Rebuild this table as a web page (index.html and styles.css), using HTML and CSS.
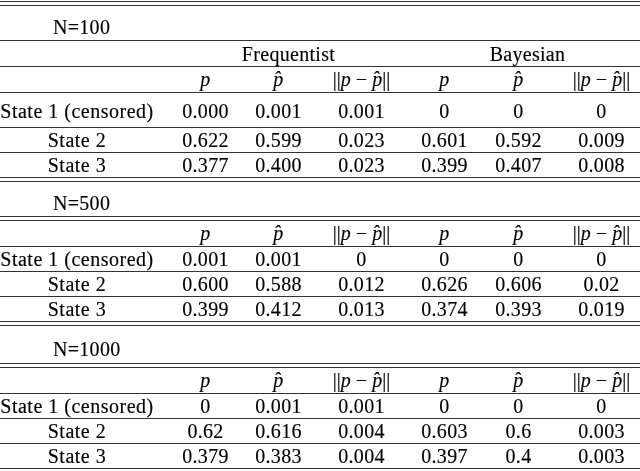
FILE: index.html
```html
<!DOCTYPE html>
<html lang="en">
<head>
  <meta charset="UTF-8">
  <title>Estimated state probabilities</title>
  <link rel="stylesheet" href="styles.css">
</head>
<body>
  <div class="table">

    <!-- N = 100 -->
    <div class="double"></div>
    <div class="row n"><span class="nlabel">N=100</span></div>
    <div class="rule"></div>
    <div class="row group">
      <span class="span-freq">Frequentist</span>
      <span class="span-bayes">Bayesian</span>
    </div>
    <div class="rule"></div>
    <div class="row head">
      <span></span>
      <span><i>p</i></span><span><i>p&#770;</i></span><span class="norm">||<i>p</i> &minus; <i>p&#770;</i>||</span>
      <span><i>p</i></span><span><i>p&#770;</i></span><span class="norm">||<i>p</i> &minus; <i>p&#770;</i>||</span>
    </div>
    <div class="rule"></div>
    <div class="row tall">
      <span class="lbl">State 1 (censored)</span>
      <span>0.000</span><span>0.001</span><span>0.001</span>
      <span>0</span><span>0</span><span>0</span>
    </div>
    <div class="rule"></div>
    <div class="row">
      <span class="lbl">State 2</span>
      <span>0.622</span><span>0.599</span><span>0.023</span>
      <span>0.601</span><span>0.592</span><span>0.009</span>
    </div>
    <div class="rule"></div>
    <div class="row">
      <span class="lbl">State 3</span>
      <span>0.377</span><span>0.400</span><span>0.023</span>
      <span>0.399</span><span>0.407</span><span>0.008</span>
    </div>

    <!-- N = 500 -->
    <div class="double"></div>
    <div class="row n"><span class="nlabel">N=500</span></div>
    <div class="double"></div>
    <div class="row head">
      <span></span>
      <span><i>p</i></span><span><i>p&#770;</i></span><span class="norm">||<i>p</i> &minus; <i>p&#770;</i>||</span>
      <span><i>p</i></span><span><i>p&#770;</i></span><span class="norm">||<i>p</i> &minus; <i>p&#770;</i>||</span>
    </div>
    <div class="rule"></div>
    <div class="row">
      <span class="lbl">State 1 (censored)</span>
      <span>0.001</span><span>0.001</span><span>0</span>
      <span>0</span><span>0</span><span>0</span>
    </div>
    <div class="rule"></div>
    <div class="row">
      <span class="lbl">State 2</span>
      <span>0.600</span><span>0.588</span><span>0.012</span>
      <span>0.626</span><span>0.606</span><span>0.02</span>
    </div>
    <div class="rule"></div>
    <div class="row">
      <span class="lbl">State 3</span>
      <span>0.399</span><span>0.412</span><span>0.013</span>
      <span>0.374</span><span>0.393</span><span>0.019</span>
    </div>

    <!-- N = 1000 -->
    <div class="double"></div>
    <div class="row n n-last"><span class="nlabel">N=1000</span></div>
    <div class="double"></div>
    <div class="row head">
      <span></span>
      <span><i>p</i></span><span><i>p&#770;</i></span><span class="norm">||<i>p</i> &minus; <i>p&#770;</i>||</span>
      <span><i>p</i></span><span><i>p&#770;</i></span><span class="norm">||<i>p</i> &minus; <i>p&#770;</i>||</span>
    </div>
    <div class="rule"></div>
    <div class="row">
      <span class="lbl">State 1 (censored)</span>
      <span>0</span><span>0.001</span><span>0.001</span>
      <span>0</span><span>0</span><span>0</span>
    </div>
    <div class="rule"></div>
    <div class="row">
      <span class="lbl">State 2</span>
      <span>0.62</span><span>0.616</span><span>0.004</span>
      <span>0.603</span><span>0.6</span><span>0.003</span>
    </div>
    <div class="rule"></div>
    <div class="row">
      <span class="lbl">State 3</span>
      <span>0.379</span><span>0.383</span><span>0.004</span>
      <span>0.397</span><span>0.4</span><span>0.003</span>
    </div>
    <div class="rule"></div>

  </div>
</body>
</html>
```

FILE: styles.css
```css
* {
  box-sizing: border-box;
}

body {
  margin: 0;
  width: 640px;
  height: 471px;
  overflow: hidden;
  background: #ffffff;
  color: #000000;
  font-family: "Liberation Serif", "DejaVu Serif", serif;
  font-size: 20px;
  letter-spacing: 0.3px;
}

/* table is a bit wider than the window, like the cropped original */
.table {
  margin: 1px 0 0 -15px;
  width: 662px;
  will-change: transform;
  -webkit-text-stroke: 0.15px #000;
}

.rule {
  height: 1px;
  background: #333333;
}

.double {
  height: 5px;
  border-top: 1px solid #333333;
  border-bottom: 1px solid #333333;
}

.row {
  display: grid;
  grid-template-columns: 184px 73px 73px 93px 73px 75px 91px;
  height: 24px;
  line-height: 24px;
  text-align: center;
  white-space: nowrap;
}

.row.tall {
  height: 34px;
  line-height: 36px;
}

.row.head {
  height: 25px;
  line-height: 25px;
}

.row.group {
  height: 25px;
  line-height: 27px;
}

.row.n {
  height: 34px;
  padding-top: 9px;
  text-align: left;
}

.row.n-last {
  height: 37px;
  padding-top: 11px;
}

.nlabel {
  grid-column: 1 / 8;
  padding-left: 68px;
}

.span-freq {
  grid-column: 2 / 5;
}

.span-bayes {
  grid-column: 5 / 8;
}

.lbl {
  letter-spacing: 0.5px;
}

.norm {
  letter-spacing: 0;
}

i {
  font-style: italic;
}
```
